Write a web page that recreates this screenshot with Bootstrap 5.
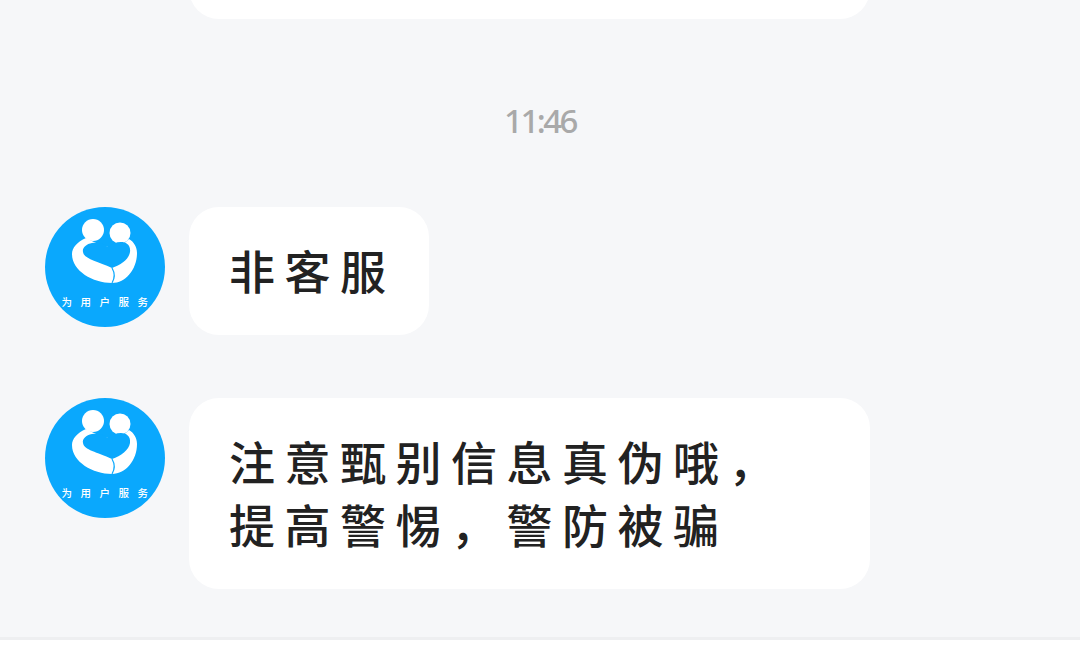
<!DOCTYPE html>
<html lang="zh-CN">
<head>
  <meta charset="UTF-8" />
  <meta name="viewport" content="width=device-width, initial-scale=1" />
  <title>消息</title>
  <link href="https://cdn.jsdelivr.net/npm/bootstrap@5.3.0/dist/css/bootstrap.min.css" rel="stylesheet" />
  <style>
    body {
      background: #f6f7f9;
      font-family: "Liberation Sans", "Noto Sans CJK SC", sans-serif;
    }
    .chat-page { height: 651px; }
    .chat-list { padding: 0 45px; min-height: 0; }
    .msg-row { gap: 24px; }
    .msg-row + .msg-row { margin-top: 63px; }
    .msg-top { margin-top: -41px; height: 60px; }
    .avatar-pic { width: 120px; height: 120px; flex: none; }
    .msg-bubble {
      max-width: 681px;
      padding: 35px 33.5px 30px 40px;
      border-radius: 30px;
      color: #222;
      font-size: 46px;
      line-height: 63px;
      letter-spacing: 9.5px;
      font-weight: 500;
    }
    .msg-wide { width: 681px; padding: 0; }
    .time-stamp {
      margin: 82px 0 66px;
      color: #a9a9a9;
      font-family: "Noto Sans", sans-serif;
      font-size: 33px;
      font-weight: 500;
      line-height: 40px;
      letter-spacing: -2.5px;
    }
    .chat-foot { height: 14px; border-top: 3px solid #eeeff1; }
  </style>
</head>
<body>
  <div class="chat-page d-flex flex-column overflow-hidden">
    <div class="chat-list flex-grow-1 overflow-hidden">
      <div class="d-flex msg-row msg-top">
        <div class="avatar-pic"></div>
        <div class="bg-white msg-bubble msg-wide"></div>
      </div>

      <div class="time-stamp text-center">11:46</div>

      <div class="d-flex msg-row align-items-start">
        <svg class="avatar-pic" viewBox="0 0 120 120">
          <use href="#logo" />
        </svg>
        <div class="bg-white msg-bubble">非客服</div>
      </div>

      <div class="d-flex msg-row align-items-start">
        <svg class="avatar-pic" viewBox="0 0 120 120">
          <use href="#logo" />
        </svg>
        <div class="bg-white msg-bubble">注意甄别信息真伪哦，提高警惕，警防被骗</div>
      </div>
    </div>
    <div class="chat-foot bg-white"></div>
  </div>

  <svg width="0" height="0" class="position-absolute">
    <defs>
      <g id="logo">
        <circle cx="60" cy="60" r="60" fill="#0aa8fd" />
        <circle cx="48" cy="23" r="11" fill="#fff" />
        <circle cx="75" cy="26" r="10.5" fill="#fff" />
        <path d="M41 31C32 35 27 41 27 47C27 64 48 76 67 76C81 76 92 62 92 46C92 40 89 35 84 32C78 38 70 42 63 40C55 38 48 35 41 31Z" fill="#fff" />
        <path d="M63 40C58 36 52 35 47 36C41 37 37 41 38 45C39 52 52 54 67 61C76 58 84 52 85 45C86 38 81 35 76 35C71 35 67 37 63 40Z" fill="#0aa8fd" />
        <path d="M67 61C70 66 70 71 67 76" fill="none" stroke="#0aa8fd" stroke-width="1.2" />
        <text x="64" y="99" text-anchor="middle" fill="#fff" font-size="10.5" font-weight="500" letter-spacing="8.5" font-family="'Noto Sans CJK SC', sans-serif">为用户服务</text>
      </g>
    </defs>
  </svg>

  <script src="https://cdn.jsdelivr.net/npm/bootstrap@5.3.0/dist/js/bootstrap.bundle.min.js"></script>
</body>
</html>
